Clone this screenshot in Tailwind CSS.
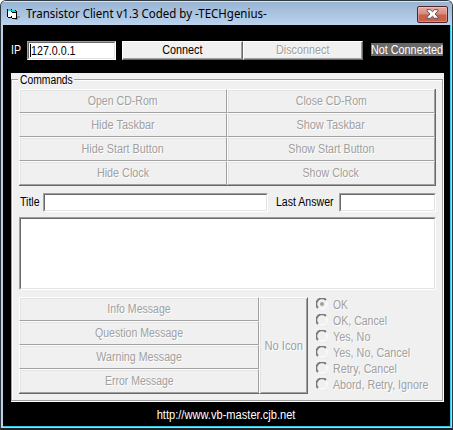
<!DOCTYPE html>
<html lang="en">
<head>
<meta charset="utf-8">
<title>Transistor Client</title>
<script src="https://cdn.jsdelivr.net/npm/@tailwindcss/browser@4"></script>
</head>
<body class="w-[453px] h-[430px] overflow-hidden bg-white font-['Liberation_Sans',sans-serif] text-[12px] leading-[14px]">
<div class="w-[453px] h-[430px] flex flex-col rounded-t-[6px] border border-[#303840] border-b-2 border-b-[#202020] bg-[#b9d1ea] overflow-hidden">
  <header class="h-6 shrink-0 flex items-center pl-[6px] pr-[4px] bg-linear-to-b from-[#98b4d2] to-[#bad2ec] shadow-[inset_0_1px_0_#d5e6f6]">
    <svg width="14" height="13" viewBox="0 0 14 13" shape-rendering="crispEdges" class="mt-[2px]">
      <path d="M9 8h4v2h-2v2H8z" fill="#8798aa"/>
      <path d="M0 1h5v1h4v1h1v8H5v-1H1V9H0z" fill="#000"/>
      <path d="M1 3h3v1h1v4h-1v1H1zM5 5h4v5H5z" fill="#fff"/>
      <path d="M1 1h3v1h4v1h1v1H5V3H1z" fill="#20d0d8"/>
    </svg>
    <span class="ml-[5px] w-[245px] mt-[2px] whitespace-nowrap font-['Noto_Sans',sans-serif] text-[12px] leading-[16px]"><span class="inline-block origin-left scale-x-[0.957]">Transistor Client v1.3 Coded by -TECHgenius-</span></span>
    <div class="ml-auto mt-[2px] w-[31px] h-[17px] rounded-[2px] border border-[#50222a] bg-linear-to-b from-[#e8aba2] from-[0%] via-[#d98a7d] via-[45%] to-[#c8604a] to-[55%] shadow-[inset_0_0_0_1px_#ffffff44] flex items-center justify-center">
      <svg width="13" height="10" viewBox="0 0 13 10"><path d="M1 .7h3.4l2.1 2 2.1-2H12v1.1L9 5l3 3.2v1.1H8.6l-2.1-2-2.1 2H1V8.200L4 5 1 1.800z" fill="#fff" stroke="#535666" stroke-width="1"/></svg>
    </div>
  </header>
  <main class="flex-1 ml-[2px] mr-px mb-px bg-black border-r border-r-[#38c8ec] border-b border-b-[#38c8ec] pl-[8px] flex flex-col">
    <div class="h-[48px] shrink-0 pt-[16px] flex text-white">
      <span class="w-[16px] pt-[2px]"><span class="inline-block origin-left scale-x-[.88]">IP</span></span>
      <div class="w-[89px] h-[19px] bg-white text-black border border-t-[#a0a0a0] border-l-[#a0a0a0] border-white"><div class="h-full border border-t-[#696969] border-l-[#696969] border-[#e3e3e3] flex items-center"><i class="ml-px w-px h-[13px] bg-black"></i><span class="origin-left scale-x-[.89]">127.0.0.1</span></div></div>
      <div class="ml-[6px] flex h-[19px] text-black">
        <div class="w-[121px] bg-[#f0f0f0] border border-white border-r-[#696969] border-b-[#696969] shadow-[inset_-1px_-1px_#a0a0a0] flex items-center justify-center pb-px"><span class="scale-x-[.9]">Connect</span></div>
        <div class="w-[120px] bg-[#f0f0f0] border border-white border-r-[#696969] border-b-[#696969] shadow-[inset_-1px_-1px_#a0a0a0] flex items-center justify-center pb-px text-[#a0a0a0] [text-shadow:1px_1px_white]"><span class="scale-x-[.9]">Disconnect</span></div>
      </div>
      <div class="ml-[8px] mt-[2px] w-[72px] h-[13px] bg-[#696969] flex items-center justify-center whitespace-nowrap"><span class="scale-x-[.9]">Not Connected</span></div>
    </div>
    <section class="w-[433px] h-[329px] shrink-0 bg-[#f0f0f0] pt-[6px] relative">
      <div class="h-[322px] border border-[#a0a0a0] shadow-[inset_1px_1px_white,1px_1px_white] mr-px pl-[7px] pr-[8px] pt-[9px]">
        <div class="grid grid-cols-[208px_208px] auto-rows-[24px] w-[417px] h-[97px] border-r border-b border-[#696969] text-[#a0a0a0] [text-shadow:1px_1px_white] *:border *:border-white *:border-r-[#a0a0a0] *:border-b-[#a0a0a0] *:shadow-[inset_1px_1px_#e3e3e3] *:flex *:items-center *:justify-center">
          <div><span class="scale-x-[.88]">Open CD-Rom</span></div><div><span class="scale-x-[.88]">Close CD-Rom</span></div>
          <div><span class="scale-x-[.91]">Hide Taskbar</span></div><div><span class="scale-x-[.91]">Show Taskbar</span></div>
          <div><span class="scale-x-[.9]">Hide Start Button</span></div><div><span class="scale-x-[.89]">Show Start Button</span></div>
          <div><span class="scale-x-[.9]">Hide Clock</span></div><div><span class="scale-x-[.89]">Show Clock</span></div>
        </div>
        <div class="mt-[7px] flex h-[19px] w-[417px] whitespace-nowrap">
          <span class="w-[24px] pl-px pt-[2px]"><span class="inline-block origin-left scale-x-[.88]">Title</span></span>
          <div class="w-[225px] bg-white border border-t-[#a0a0a0] border-l-[#a0a0a0] border-white"><div class="h-full border border-t-[#696969] border-l-[#696969] border-[#e3e3e3]"></div></div>
          <span class="w-[71px] pl-[8px] pt-[2px]"><span class="inline-block origin-left scale-x-[.88]">Last Answer</span></span>
          <div class="w-[97px] bg-white border border-t-[#a0a0a0] border-l-[#a0a0a0] border-white"><div class="h-full border border-t-[#696969] border-l-[#696969] border-[#e3e3e3]"></div></div>
        </div>
        <div class="mt-[5px] h-[73px] w-[417px] bg-white border border-t-[#a0a0a0] border-l-[#a0a0a0] border-white"><div class="h-full border border-t-[#696969] border-l-[#696969] border-[#e3e3e3]"></div></div>
        <div class="mt-[7px] h-[97px] flex text-[#a0a0a0] [text-shadow:1px_1px_white] whitespace-nowrap">
          <div class="shrink-0 grid auto-rows-[24px] w-[240px] border-b border-[#696969] *:border *:border-white *:border-r-[#a0a0a0] *:border-b-[#a0a0a0] *:shadow-[inset_1px_1px_#e3e3e3] *:flex *:items-center *:justify-center">
            <div><span class="scale-x-[.88]">Info Message</span></div>
            <div><span class="scale-x-[.88]">Question Message</span></div>
            <div><span class="scale-x-[.89]">Warning Message</span></div>
            <div><span class="scale-x-[.87]">Error Message</span></div>
          </div>
          <div class="shrink-0 w-[49px] border border-white border-r-[#696969] border-b-[#696969] shadow-[inset_1px_1px_#e3e3e3,inset_-1px_-1px_#a0a0a0] flex items-center justify-center"><span class="scale-x-[.93]">No Icon</span></div>
          <div class="ml-[8px] w-[111px] shrink-0 -mr-[10px] flex flex-col *:h-4 *:flex *:items-center *:gap-[5px] [&_svg]:shrink-0 [&_svg]:-mt-[3px]">
            <div><svg width="12" height="12" viewBox="0 0 12 12"><circle cx="6" cy="6" r="5" fill="#f0f0f0" stroke="#fff"/><path d="M2 10A5.4 5.4 0 0 1 10 2" fill="none" stroke="#777" stroke-width="1.8"/><circle cx="6" cy="6" r="2" fill="#a0a0a0"/></svg><span class="origin-left scale-x-[.86]">OK</span></div>
            <div><svg width="12" height="12" viewBox="0 0 12 12"><circle cx="6" cy="6" r="5" fill="#f0f0f0" stroke="#fff"/><path d="M2 10A5.4 5.4 0 0 1 10 2" fill="none" stroke="#777" stroke-width="1.8"/></svg><span class="origin-left scale-x-[.88]">OK, Cancel</span></div>
            <div><svg width="12" height="12" viewBox="0 0 12 12"><circle cx="6" cy="6" r="5" fill="#f0f0f0" stroke="#fff"/><path d="M2 10A5.4 5.4 0 0 1 10 2" fill="none" stroke="#777" stroke-width="1.8"/></svg><span class="origin-left scale-x-[.9]">Yes, No</span></div>
            <div><svg width="12" height="12" viewBox="0 0 12 12"><circle cx="6" cy="6" r="5" fill="#f0f0f0" stroke="#fff"/><path d="M2 10A5.4 5.4 0 0 1 10 2" fill="none" stroke="#777" stroke-width="1.8"/></svg><span class="origin-left scale-x-[.9]">Yes, No, Cancel</span></div>
            <div><svg width="12" height="12" viewBox="0 0 12 12"><circle cx="6" cy="6" r="5" fill="#f0f0f0" stroke="#fff"/><path d="M2 10A5.4 5.4 0 0 1 10 2" fill="none" stroke="#777" stroke-width="1.8"/></svg><span class="origin-left scale-x-[.89]">Retry, Cancel</span></div>
            <div><svg width="12" height="12" viewBox="0 0 12 12"><circle cx="6" cy="6" r="5" fill="#f0f0f0" stroke="#fff"/><path d="M2 10A5.4 5.4 0 0 1 10 2" fill="none" stroke="#777" stroke-width="1.8"/></svg><span class="origin-left scale-x-[.89]">Abord, Retry, Ignore</span></div>
          </div>
        </div>
      </div>
      <div class="absolute left-[7px] top-0 w-[56px] pl-[2px] bg-[#f0f0f0]"><span class="inline-block origin-left scale-x-[.86]">Commands</span></div>
    </section>
    <footer class="flex-1 flex items-center justify-center text-white pr-[8px] pt-[2px]"><span class="scale-x-[.925]">http://www.vb-master.cjb.net</span></footer>
  </main>
</div>
</body>
</html>
